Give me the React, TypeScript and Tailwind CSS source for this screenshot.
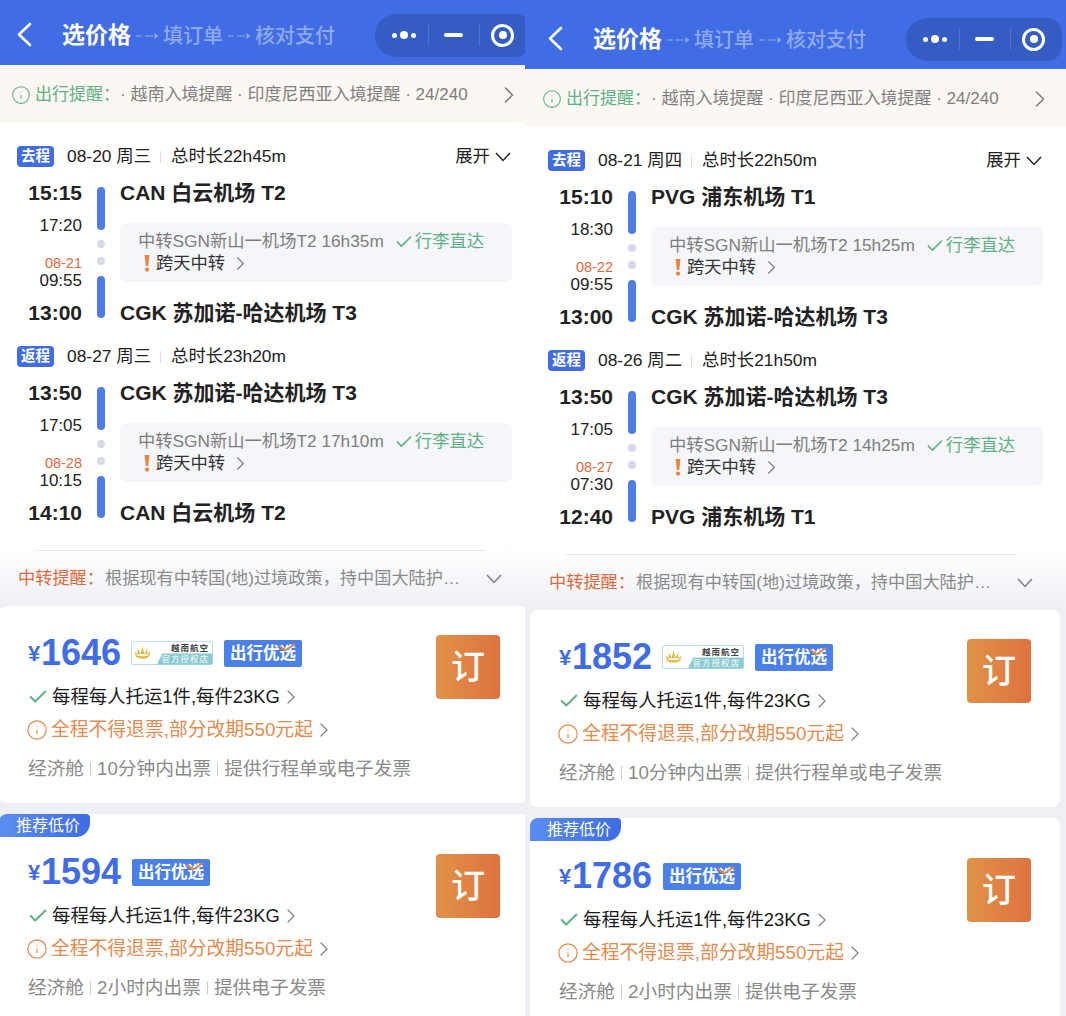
import React from 'react';
import { ChevronRight, Check, Info } from 'lucide-react';

const font = { fontFamily: '"Liberation Sans", "Noto Sans CJK SC", sans-serif' };

type Leg = {
  tag: string;
  date: string;
  total: string;
  depart: string;
  land: string;
  nextDate: string;
  takeoff: string;
  arrive: string;
  from: string;
  to: string;
  transit: string;
  expand?: boolean;
};

type Fare = {
  price: string;
  logo?: boolean;
  recommend?: boolean;
  extras: string[];
};

type PanelData = {
  legs: Leg[];
  fares: Fare[];
};

const panels: PanelData[] = [
  {
    legs: [
      { tag: '去程', date: '08-20 周三', total: '总时长22h45m', depart: '15:15', land: '17:20', nextDate: '08-21', takeoff: '09:55', arrive: '13:00', from: 'CAN 白云机场 T2', to: 'CGK 苏加诺-哈达机场 T3', transit: '中转SGN新山一机场T2 16h35m', expand: true },
      { tag: '返程', date: '08-27 周三', total: '总时长23h20m', depart: '13:50', land: '17:05', nextDate: '08-28', takeoff: '10:15', arrive: '14:10', from: 'CGK 苏加诺-哈达机场 T3', to: 'CAN 白云机场 T2', transit: '中转SGN新山一机场T2 17h10m' },
    ],
    fares: [
      { price: '1646', logo: true, extras: ['10分钟内出票', '提供行程单或电子发票'] },
      { price: '1594', recommend: true, extras: ['2小时内出票', '提供电子发票'] },
    ],
  },
  {
    legs: [
      { tag: '去程', date: '08-21 周四', total: '总时长22h50m', depart: '15:10', land: '18:30', nextDate: '08-22', takeoff: '09:55', arrive: '13:00', from: 'PVG 浦东机场 T1', to: 'CGK 苏加诺-哈达机场 T3', transit: '中转SGN新山一机场T2 15h25m', expand: true },
      { tag: '返程', date: '08-26 周二', total: '总时长21h50m', depart: '13:50', land: '17:05', nextDate: '08-27', takeoff: '07:30', arrive: '12:40', from: 'CGK 苏加诺-哈达机场 T3', to: 'PVG 浦东机场 T1', transit: '中转SGN新山一机场T2 14h25m' },
    ],
    fares: [
      { price: '1852', logo: true, extras: ['10分钟内出票', '提供行程单或电子发票'] },
      { price: '1786', recommend: true, extras: ['2小时内出票', '提供电子发票'] },
    ],
  },
];

const StepArrow = () => (
  <svg width="24" height="8" viewBox="0 0 24 8" className="mx-[4px] mt-[1px] shrink-0" fill="none" stroke="#8fa9ee" strokeWidth="1.2">
    <path d="M1 4h6M10 4h8" />
    <path d="M20 2.2 22.6 4 20 5.8Z" fill="#8fa9ee" />
  </svg>
);

const DownArrow = ({ color }: { color: string }) => (
  <svg width="16" height="10" viewBox="0 0 16 10" fill="none" stroke={color} strokeWidth="1.5" className="shrink-0">
    <path d="M1 1l7 7.5L15 1" />
  </svg>
);

const Capsule = () => (
  <div className="ml-auto mr-[4px] flex h-[43px] w-[156px] shrink-0 items-center rounded-l-[22px] rounded-r-[16px] bg-[#355cc2]">
    <div className="flex w-[41px] items-center justify-end gap-[3px]">
      <span className="h-[5px] w-[5px] rounded-full bg-white" />
      <span className="h-[8px] w-[8px] rounded-full bg-white" />
      <span className="h-[5px] w-[5px] rounded-full bg-white" />
    </div>
    <span className="ml-[12px] h-[22px] w-px bg-[#4f74d0]" />
    <span className="ml-[15px] h-[4px] w-[19px] rounded-full bg-white" />
    <span className="ml-[16px] h-[22px] w-px bg-[#4f74d0]" />
    <span className="ml-[11px] flex h-[23px] w-[23px] items-center justify-center rounded-full border-[3px] border-white">
      <span className="h-[8px] w-[8px] rounded-full bg-white" />
    </span>
  </div>
);

const Header = ({ tall }: { tall: boolean }) => (
  <div className={`flex items-center bg-[#406ce4] pl-[22px] ${tall ? 'h-[69px] pt-[9px]' : 'h-[65px] pt-[5px]'}`}>
    <svg width="16" height="25" viewBox="0 0 16 25" fill="none" stroke="#fff" strokeWidth="2.6" strokeLinecap="round" strokeLinejoin="round" className="mb-[2px] shrink-0">
      <path d="M14 2 3 12.5 14 23" />
    </svg>
    <span className="ml-[30px] mt-[1px] text-[23px] font-bold leading-none text-white">选价格</span>
    <StepArrow />
    <span className="mt-[1px] text-[20px] font-medium leading-none text-[#8fa9ee]">填订单</span>
    <StepArrow />
    <span className="mt-[1px] text-[20px] font-medium leading-none text-[#8fa9ee]">核对支付</span>
    <Capsule />
  </div>
);

const Notice = () => (
  <div className="flex h-[58px] items-center bg-[#fbf7f2] pl-[17px] pt-[1px]">
    <Info size={20} strokeWidth={1.3} color="#62b184" className="shrink-0" />
    <span className="ml-[4px] text-[17px] text-[#62b184]">出行提醒：</span>
    <span className="text-[17px] text-[#7f7f7f]">· 越南入境提醒 · 印度尼西亚入境提醒 · 24/240</span>
    <ChevronRight size={28} strokeWidth={1.4} color="#808080" className="ml-[27px]" />
  </div>
);

const LegBlock = ({ leg }: { leg: Leg }) => (
  <div className="mb-[20px]">
    <div className="flex h-[21px] items-center text-[17.4px] text-[#222]">
      <span className="flex h-[21px] w-[37px] items-center justify-center rounded-[4px] bg-[#406ce4] text-[14.5px] font-bold text-white">{leg.tag}</span>
      <span className="ml-[13px] w-[85px] whitespace-nowrap">{leg.date}</span>
      <span className="ml-[8px] h-[12px] w-px bg-[#ddd]" />
      <span className="ml-[10px]">{leg.total}</span>
      {leg.expand && (
        <span className="ml-auto mr-[24px] flex items-center gap-[5px] text-[#222]">
          展开
          <DownArrow color="#222" />
        </span>
      )}
    </div>
    <div className="mt-[13px] flex">
      <div className="flex w-[65px] flex-col items-end">
        <span className="h-[26px] text-[21px] font-bold leading-[26px] text-[#222]">{leg.depart}</span>
        <span className="mt-[10px] h-[20px] text-[17px] leading-[20px] text-[#222]">{leg.land}</span>
        <span className="mt-[20px] h-[15px] text-[14.5px] leading-[15px] text-[#e0683a]">{leg.nextDate}</span>
        <span className="mt-[1px] h-[18px] text-[17px] leading-[18px] text-[#222]">{leg.takeoff}</span>
        <span className="mt-[10px] h-[26px] text-[21px] font-bold leading-[26px] text-[#222]">{leg.arrive}</span>
      </div>
      <div className="ml-[15px] flex w-[8px] flex-col items-center">
        <span className="mt-[7px] h-[43px] w-[8px] rounded-full bg-[#4f7de8]" />
        <span className="mt-[10px] h-[8px] w-[8px] rounded-full bg-[#d5daea]" />
        <span className="mt-[9px] h-[8px] w-[8px] rounded-full bg-[#d5daea]" />
        <span className="mt-[11px] h-[42px] w-[8px] rounded-full bg-[#4f7de8]" />
      </div>
      <div className="ml-[15px] flex w-[392px] flex-col">
        <span className="h-[26px] text-[21px] font-bold leading-[26px] text-[#222]">{leg.from}</span>
        <div className="mt-[17px] h-[59px] rounded-[6px] bg-[#f5f6f9] pl-[18px] pt-[8px] text-[17.3px] leading-[21px]">
          <div className="flex items-center">
            <span className="text-[#7d7d7d]">{leg.transit}</span>
            <Check size={20} strokeWidth={2} color="#62b184" className="ml-[10px]" />
            <span className="ml-[1px] text-[#62b184]">行李直达</span>
          </div>
          <div className="flex items-center text-[#333]">
            <span className="flex w-[18px] justify-center">
              <svg width="6" height="17" viewBox="0 0 6 17" fill="#e8863f">
                <path d="M0.5 0h5L4.2 11H1.8Z" />
                <circle cx="3" cy="14.6" r="2.1" />
              </svg>
            </span>
            跨天中转
            <ChevronRight size={23} strokeWidth={1.2} color="#808080" className="ml-[4px]" />
          </div>
        </div>
        <span className="mt-[18px] h-[26px] text-[21px] font-bold leading-[26px] text-[#222]">{leg.to}</span>
      </div>
    </div>
  </div>
);

const AirlineLogo = () => (
  <svg width="82" height="24" viewBox="0 0 82 24" className="ml-[10px] shrink-0">
    <rect x="0.5" y="0.5" width="81" height="23" rx="1.5" fill="#fff" stroke="#b5e0e8" />
    <path d="M26 23.5 31 12.5H81.5V22a1.5 1.5 0 0 1-1.5 1.5Z" fill="#89cbd0" />
    <path d="M4 14c5 1.6 10 1.6 15 0-1 2.6-4 3.6-7.5 3.6S5 16.6 4 14Z" fill="#e2b93c" />
    <path d="M11.5 5l1.8 8h-3.6ZM6.6 7.5l3.2 5.5-3 .4ZM16.4 7.5l-3.2 5.5 3 .4ZM3.6 10.5l4 3-3 .2ZM19.4 10.5l-4 3 3 .2Z" fill="#e2b93c" />
    <text x="78" y="10" textAnchor="end" fontSize="8.5" fontWeight="700" letterSpacing="1" fill="#444">越南航空</text>
    <text x="78" y="21" textAnchor="end" fontSize="8.5" letterSpacing="1" fill="#fff">官方授权店</text>
  </svg>
);

const PreferBadge = () => (
  <span className="relative ml-[11px] flex h-[27px] w-[78px] shrink-0 items-center justify-center rounded-[2px] bg-[#4a80e8] text-[16.5px] font-bold text-white">
    出行优选
    <svg width="18" height="9" viewBox="0 0 18 9" className="absolute right-[6px] top-[3px]" fill="none">
      <path d="M1 2.5 7 7.5 17 1" stroke="#d98a4a" strokeWidth="2" />
    </svg>
  </span>
);

const FareCard = ({ fare }: { fare: Fare }) => (
  <div className={`relative flex w-[530px] rounded-[8px] bg-white pl-[29px] pr-[29px] ${fare.recommend ? 'pt-[38px] h-[240px]' : 'pt-[27px] h-[197px]'}`}>
    {fare.recommend && (
      <span className="absolute left-0 top-0 flex h-[23px] w-[91px] items-center justify-end rounded-tl-[8px] rounded-tr-[4px] rounded-br-[14px] bg-gradient-to-r from-[#5b8df0] to-[#3e6ce4] pr-[10px] text-[16px] leading-none text-white">
        推荐低价
      </span>
    )}
    <div className="flex-1">
      <div className="flex h-[40px] items-center">
        <span className="mt-[1px] w-[13px] text-[22px] font-bold text-[#406ce4]">¥</span>
        <span className="text-[36px] font-bold leading-none text-[#406ce4]">{fare.price}</span>
        {fare.logo && <AirlineLogo />}
        <PreferBadge />
      </div>
      <div className="mt-[10px] flex h-[28px] items-center text-[18.4px] text-[#1a1a1a]">
        <Check size={22} strokeWidth={2.2} color="#62b184" className="-ml-[1px] shrink-0" />
        <span className="ml-[3px]">每程每人托运1件,每件23KG</span>
        <ChevronRight size={24} strokeWidth={1.2} color="#808080" className="-ml-[1px]" />
      </div>
      <div className="mt-[5px] flex h-[28px] items-center text-[18.8px] text-[#e48a4e]">
        <Info size={22} strokeWidth={1.3} color="#e48a4e" className="-ml-[2px] shrink-0" />
        <span className="ml-[3px]">全程不得退票,部分改期550元起</span>
        <ChevronRight size={24} strokeWidth={1.2} color="#808080" className="-ml-[1px]" />
      </div>
      <div className="mt-[11px] flex h-[28px] items-center text-[18.7px] text-[#8a8a8a]">
        <span>经济舱</span>
        {fare.extras.map((item) => (
          <React.Fragment key={item}>
            <span className="mx-[6px] h-[14px] w-px bg-[#ccc]" />
            <span>{item}</span>
          </React.Fragment>
        ))}
      </div>
    </div>
    <div className="mt-[2px] flex h-[64px] w-[64px] shrink-0 items-center justify-center rounded-[4px] bg-gradient-to-r from-[#e09248] to-[#dd7240] text-[34px] font-medium leading-none text-white">
      订
    </div>
  </div>
);

const Panel = ({ data, tall }: { data: PanelData; tall: boolean }) => (
  <div className="flex w-[541px] shrink-0 flex-col bg-[#eef0f5]">
    <Header tall={tall} />
    <Notice />
    <div className="bg-white pl-[23px] pt-[23px]">
      {data.legs.map((leg) => (
        <LegBlock key={leg.tag} leg={leg} />
      ))}
    </div>
    <div className="bg-gradient-to-b from-white to-[#eef0f5] px-[24px] pt-[4px]">
      <div className="mx-[17px] h-px w-[451px] bg-[#e8e9ec]" />
      <div className="flex h-[55px] items-center pt-[1px] text-[17.2px]">
        <span className="text-[#e0683a]">中转提醒：</span>
        <span className="ml-[1px] text-[#8a8a8a]">根据现有中转国(地)过境政策，持中国大陆护…</span>
        <span className="ml-[26px]">
          <DownArrow color="#808080" />
        </span>
      </div>
    </div>
    <div className="flex flex-col gap-[11px] pl-[5px]">
      {data.fares.map((fare) => (
        <FareCard key={fare.price} fare={fare} />
      ))}
    </div>
  </div>
);

const App: React.FC = () => {
  return (
    <div className="flex h-[1016px] w-[1066px] items-start overflow-hidden bg-[#eef0f5]" style={font}>
      <div className="w-[525px] shrink-0 overflow-hidden">
        <div className="-ml-[6px] w-[541px]">
          <Panel data={panels[0]} tall={false} />
        </div>
      </div>
      <Panel data={panels[1]} tall={true} />
    </div>
  );
};

export default App;
